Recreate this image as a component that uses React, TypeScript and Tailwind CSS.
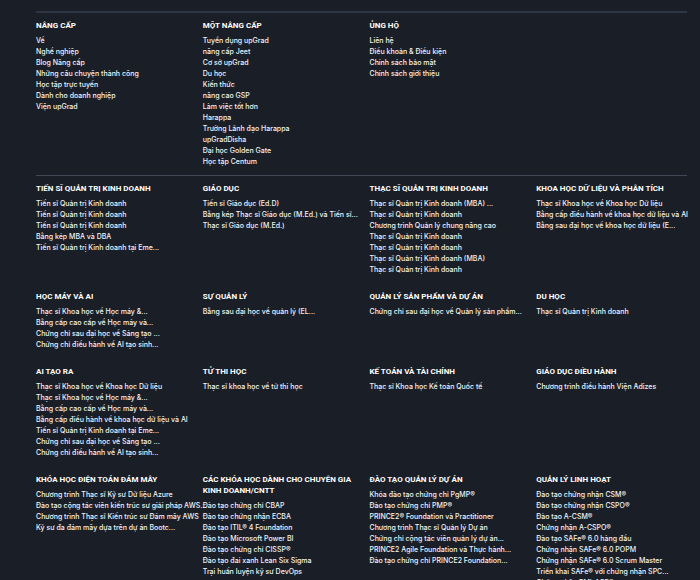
interface LinkGroup {
  title: string;
  links: string[];
}

const COMPANY: LinkGroup[] = [
  {
    title: 'NÂNG CẤP',
    links: ['Về', 'Nghề nghiệp', 'Blog Nâng cấp', 'Những câu chuyện thành công', 'Học tập trực tuyến', 'Dành cho doanh nghiệp', 'Viện upGrad']
  },
  {
    title: 'MỘT NÂNG CẤP',
    links: [
      'Tuyển dụng upGrad',
      'nâng cấp Jeet',
      'Cơ sở upGrad',
      'Du học',
      'Kiến thức',
      'nâng cao GSP',
      'Làm việc tốt hơn',
      'Harappa',
      'Trường Lãnh đạo Harappa',
      'upGradDisha',
      'Đại học Golden Gate',
      'Học tập Centum'
    ]
  },
  {
    title: 'ỦNG HỘ',
    links: ['Liên hệ', 'Điều khoản & Điều kiện', 'Chính sách bảo mật', 'Chính sách giới thiệu']
  }
];

const PROGRAMS: LinkGroup[] = [
  {
    title: 'TIẾN SĨ QUẢN TRỊ KINH DOANH',
    links: [
      'Tiến sĩ Quản trị Kinh doanh',
      'Tiến sĩ Quản trị Kinh doanh',
      'Tiến sĩ Quản trị Kinh doanh',
      'Bằng kép MBA và DBA',
      'Tiến sĩ Quản trị Kinh doanh tại Eme...'
    ]
  },
  {
    title: 'GIÁO DỤC',
    links: ['Tiến sĩ Giáo dục (Ed.D)', 'Bằng kép Thạc sĩ Giáo dục (M.Ed.) và Tiến sĩ...', 'Thạc sĩ Giáo dục (M.Ed.)']
  },
  {
    title: 'THẠC SĨ QUẢN TRỊ KINH DOANH',
    links: [
      'Thạc sĩ Quản trị Kinh doanh (MBA) ...',
      'Thạc sĩ Quản trị Kinh doanh',
      'Chương trình Quản lý chung nâng cao',
      'Thạc sĩ Quản trị Kinh doanh',
      'Thạc sĩ Quản trị Kinh doanh',
      'Thạc sĩ Quản trị Kinh doanh (MBA)',
      'Thạc sĩ Quản trị Kinh doanh'
    ]
  },
  {
    title: 'KHOA HỌC DỮ LIỆU VÀ PHÂN TÍCH',
    links: [
      'Thạc sĩ Khoa học về Khoa học Dữ liệu',
      'Bằng cấp điều hành về khoa học dữ liệu và AI',
      'Bằng sau đại học về khoa học dữ liệu (E...'
    ]
  },
  {
    title: 'HỌC MÁY VÀ AI',
    links: [
      'Thạc sĩ Khoa học về Học máy &...',
      'Bằng cấp cao cấp về Học máy và...',
      'Chứng chỉ sau đại học về Sáng tạo ...',
      'Chứng chỉ điều hành về AI tạo sinh...'
    ]
  },
  { title: 'SỰ QUẢN LÝ', links: ['Bằng sau đại học về quản lý (EL...'] },
  { title: 'QUẢN LÝ SẢN PHẨM VÀ DỰ ÁN', links: ['Chứng chỉ sau đại học về Quản lý sản phẩm...'] },
  { title: 'DU HỌC', links: ['Thạc sĩ Quản trị Kinh doanh'] },
  {
    title: 'AI TẠO RA',
    links: [
      'Thạc sĩ Khoa học về Khoa học Dữ liệu',
      'Thạc sĩ Khoa học về Học máy &...',
      'Bằng cấp cao cấp về Học máy và...',
      'Bằng cấp điều hành về khoa học dữ liệu và AI',
      'Tiến sĩ Quản trị Kinh doanh tại Eme...',
      'Chứng chỉ sau đại học về Sáng tạo ...',
      'Chứng chỉ điều hành về AI tạo sinh...'
    ]
  },
  { title: 'TỬ THI HỌC', links: ['Thạc sĩ khoa học về tử thi học'] },
  { title: 'KẾ TOÁN VÀ TÀI CHÍNH', links: ['Thạc sĩ Khoa học Kế toán Quốc tế'] },
  { title: 'GIÁO DỤC ĐIỀU HÀNH', links: ['Chương trình điều hành Viện Adizes'] },
  {
    title: 'KHÓA HỌC ĐIỆN TOÁN ĐÁM MÂY',
    links: [
      'Chương trình Thạc sĩ Kỹ sư Dữ liệu Azure',
      'Đào tạo cộng tác viên kiến trúc sư giải pháp AWS...',
      'Chương trình Thạc sĩ Kiến trúc sư Đám mây AWS',
      'Kỹ sư đa đám mây dựa trên dự án Bootc...'
    ]
  },
  {
    title: 'CÁC KHÓA HỌC DÀNH CHO CHUYÊN GIA KINH DOANH/CNTT',
    links: [
      'Đào tạo chứng chỉ CBAP',
      'Đào tạo chứng nhận ECBA',
      'Đào tạo ITIL® 4 Foundation',
      'Đào tạo Microsoft Power BI',
      'Đào tạo chứng chỉ CISSP®',
      'Đào tạo đai xanh Lean Six Sigma',
      'Trại huấn luyện kỹ sư DevOps'
    ]
  },
  {
    title: 'ĐÀO TẠO QUẢN LÝ DỰ ÁN',
    links: [
      'Khóa đào tạo chứng chỉ PgMP®',
      'Đào tạo chứng chỉ PMP®',
      'PRINCE2® Foundation và Practitioner',
      'Chương trình Thạc sĩ Quản lý Dự án',
      'Chứng chỉ cộng tác viên quản lý dự án...',
      'PRINCE2 Agile Foundation và Thực hành...',
      'Đào tạo chứng chỉ PRINCE2 Foundation...'
    ]
  },
  {
    title: 'QUẢN LÝ LINH HOẠT',
    links: [
      'Đào tạo chứng nhận CSM®',
      'Đào tạo chứng nhận CSPO®',
      'Đào tạo A-CSM®',
      'Chứng nhận A-CSPO®',
      'Đào tạo SAFe® 6.0 hàng đầu',
      'Chứng nhận SAFe® 6.0 POPM',
      'Chứng nhận SAFe® 6.0 Scrum Master',
      'Triển khai SAFe® với chứng nhận SPC...',
      'Chứng nhận PMI-ACP®'
    ]
  }
];

function LinkColumn({ title, links }: LinkGroup) {
  return (
    <section className="min-w-0">
      <h2 className="mb-1 pr-4 font-['Roboto',sans-serif] text-[8px] leading-[11px] font-bold text-white">{title}</h2>
      <ul>
        {links.map((label, i) => (
          <li key={i} className="text-[7px] leading-[11px] font-medium whitespace-nowrap text-gray-100">
            <a href="#" className="hover:underline">{label}</a>
          </li>
        ))}
      </ul>
    </section>
  );
}

function LinkGrid({ groups }: { groups: LinkGroup[] }) {
  return (
    <div className="-mr-4 grid grid-cols-4 gap-y-4">
      {groups.map(g => <LinkColumn key={g.title} {...g} />)}
    </div>
  );
}

export default function App() {
  return (
    <footer className="min-h-screen overflow-x-hidden bg-[#1a1e26] pt-[11px] pr-[13px] pl-9 font-['Inter',sans-serif]">
      <div className="border-t-2 border-[#2e3643] pt-[7px] pb-2">
        <LinkGrid groups={COMPANY} />
      </div>
      <div className="border-t border-[#3f4754] pt-[7px]">
        <LinkGrid groups={PROGRAMS} />
      </div>
    </footer>
  );
}
